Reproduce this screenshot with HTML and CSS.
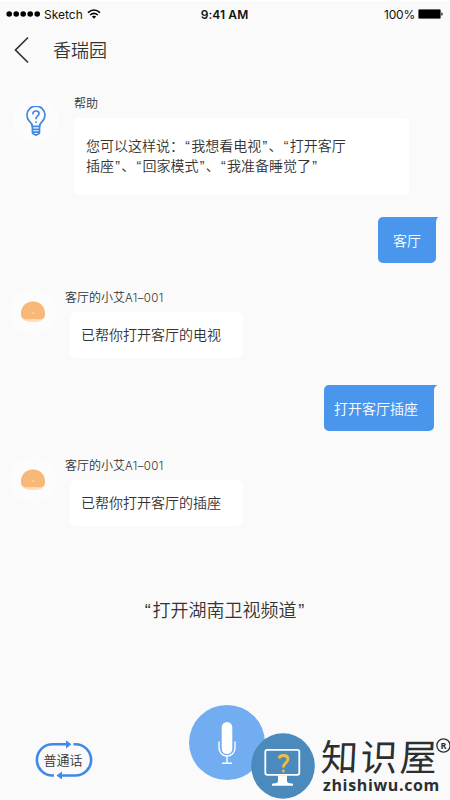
FILE: index.html
```html
<!DOCTYPE html>
<html lang="zh-CN">
<head>
<meta charset="utf-8">
<title>香瑞园</title>
<link rel="stylesheet" href="styles.css">
</head>
<body>
<div class="screen">
  <header class="status">
    <div class="carrier">
      <svg width="35" height="8" viewBox="0 0 35 8"><circle cx="3.2" cy="4" r="2.8"/><circle cx="10.2" cy="4" r="2.8"/><circle cx="17.2" cy="4" r="2.8"/><circle cx="24.2" cy="4" r="2.8"/><circle cx="31.2" cy="4" r="2.8"/></svg>
      <span class="network">Sketch</span>
      <svg width="14" height="10" viewBox="0 0 14 10"><g fill="none" stroke="#000" stroke-width="1.6"><path d="M1 3.7Q7-1.7 13 3.7"/><path d="M3.2 6Q7 2.7 10.8 6"/></g><path d="M4.9 7.5Q7 5.9 9.1 7.5L7 9.7z"/></svg>
    </div>
    <div class="clock">9:41 AM</div>
    <div class="power"><span class="percent">100%</span>
      <svg width="25" height="10" viewBox="0 0 25 10"><rect x=".5" y=".5" width="22" height="9" rx="1" fill="#000" stroke="#666"/><path d="M23.4 3.2q1.3.4 1.3 1.8t-1.3 1.8z"/></svg>
    </div>
  </header>
  <nav class="nav">
    <svg width="15" height="28" viewBox="0 0 15 28"><path d="M14 1.5L1.5 14 14 26.5" fill="none" stroke="#333" stroke-width="1.7"/></svg>
    <h1>香瑞园</h1>
  </nav>
  <main>
    <section class="message help">
      <div class="avatar">
        <svg width="20" height="31" viewBox="0 0 20 31" fill="none" stroke="#4287e2" stroke-width="1.7" stroke-linecap="round"><path d="M6.3 20.3c0-2.4-1.4-3.5-3-5.2A9 9 0 1 1 16.6 15.1c-1.6 1.7-3 2.8-3 5.2z"/><path d="M6.4 20.5v6q0 1.2 1.5 1.7 2 1.6 4 0 1.6-.5 1.6-1.7v-6M6.5 23.4h7M6.5 26.2h7"/><path d="M6.9 7.7Q7 5 10 5t3.1 2.6c0 2.3-3.1 2.3-3.1 5"/><path d="M10 16.2v.1"/></svg>
      </div>
      <div class="body">
        <div class="name">帮助</div>
        <div class="bubble">您可以这样说：<i>“</i>我想看电视<i>”</i>、<i>“</i>打开客厅<br>插座<i>”</i>、<i>“</i>回家模式<i>”</i>、<i>“</i>我准备睡觉了<i>”</i></div>
      </div>
    </section>
    <section class="sent room"><div class="sent-bubble">客厅<svg class="tail" width="4" height="6" viewBox="0 0 4 6"><path d="M0 0H3.2Q1.2 1.4 1 5L0 6z" fill="#4a96ed"/></svg></div></section>
    <section class="message reply">
      <div class="avatar">
        <svg width="26" height="22" viewBox="0 0 26 22"><path d="M1 13C1-3.8 25-3.8 25 13Q25 21 13 21T1 13z" fill="#fcdcba"/><path d="M1 12.5C1-3.6 25-3.6 25 12.5Q25 17.5 21.5 18.2 13 17.8 4.5 18.2 1 17.5 1 12.5z" fill="#f7b878"/><circle cx="13" cy="12" r=".8" fill="#ffe5b5"/></svg>
      </div>
      <div class="body"><div class="name">客厅的小艾<span class="model">A1–001</span></div><div class="bubble">已帮你打开客厅的电视</div></div>
    </section>
    <section class="sent socket"><div class="sent-bubble">打开客厅插座<svg class="tail" width="6" height="6" viewBox="0 0 6 6"><path d="M0 0H4.8Q1.2 1.4 1 5L0 6z" fill="#4a96ed"/></svg></div></section>
    <section class="message reply">
      <div class="avatar">
        <svg width="26" height="22" viewBox="0 0 26 22"><path d="M1 13C1-3.8 25-3.8 25 13Q25 21 13 21T1 13z" fill="#fcdcba"/><path d="M1 12.5C1-3.6 25-3.6 25 12.5Q25 17.5 21.5 18.2 13 17.8 4.5 18.2 1 17.5 1 12.5z" fill="#f7b878"/><circle cx="13" cy="12" r=".8" fill="#ffe5b5"/></svg>
      </div>
      <div class="body"><div class="name">客厅的小艾<span class="model">A1–001</span></div><div class="bubble">已帮你打开客厅的插座</div></div>
    </section>
    <p class="transcript"><i>“</i>打开湖南卫视频道<i>”</i></p>
  </main>
  <footer class="controls">
    <div class="language">
      <svg class="loop" width="58" height="42" viewBox="0 0 58 42"><g fill="none" stroke="#3f8ae8" stroke-width="2.6"><path d="M32 5.3H17.5A15.6 15.6 0 0 0 17.5 36.5H19"/><path d="M38.5 5.3H40.5A15.6 15.6 0 0 1 40.5 36.5H24"/></g><path d="M31 1.2L36.3 5.3 31 9.4zM27 32.4L21.5 36.5 27 40.6z" fill="#3f8ae8"/></svg>
      <span>普通话</span>
    </div>
    <div class="mic">
      <svg width="18" height="44" viewBox="0 0 18 44"><rect x="3.7" y="1" width="10.6" height="32" rx="5.3" fill="#fff"/><path d="M1 20.5V27a8 8 0 0 0 16 0v-6.5M9 35v7M4 42.3h10" fill="none" stroke="#fff" stroke-width="1.4"/></svg>
    </div>
  </footer>
  <aside class="watermark">
    <svg class="badge" width="64" height="66" viewBox="0 0 64 66"><ellipse cx="32" cy="33" rx="31.8" ry="32.7" fill="#4b8abd"/><rect x="14.3" y="16.8" width="34" height="25" rx="2" fill="none" stroke="#fff" stroke-width="1.8"/><path d="M27 42.5h9v5.5q0 2 3 2.3l3 .4v2H21v-2l3-.4q3-.3 3-2.3z" fill="#fff"/><path d="M28 25.5Q28.6 22.5 32.4 22.5 37 22.6 37 26.3C37 29.7 32.3 30 32.3 34.5" fill="none" stroke="#efbd42" stroke-width="2.8"/><circle cx="32.3" cy="38" r="1.5" fill="#efbd42"/></svg>
    <div class="brand"><div class="brand-name">知识屋</div><div class="domain">zhishiwu.com</div></div>
    <svg class="registered" width="15" height="15" viewBox="0 0 15 15"><circle cx="7.5" cy="7.5" r="6.6" fill="none" stroke="#2c2f30" stroke-width="1.3"/><text x="7.6" y="10.9" text-anchor="middle">R</text></svg>
  </aside>
</div>
</body>
</html>
```
FILE: styles.css
```css
* { box-sizing: border-box; }
body { margin: 0; }
.screen { position: relative; width: 450px; height: 800px; overflow: hidden; display: flex; flex-direction: column; background: #fafafa; border-top: 1px solid #fff; color: #333; font-family: "Noto Sans CJK SC", sans-serif; font-weight: 350; }
svg { display: block; flex: none; }
.status { height: 26px; padding: 0 7px 0 6px; display: grid; grid-template-columns: 1fr auto 1fr; align-items: center; color: #111; font: 400 12px/14px Inter, sans-serif; }
.carrier, .power { display: flex; align-items: center; }
.network { margin: 0 4px 0 3px; padding-top: 1px; }
.clock { padding-top: 1px; font-weight: 600; letter-spacing: .1px; }
.percent { padding-top: 1px; letter-spacing: -.2px; }
.power { justify-content: flex-end; gap: 3px; }
.nav { height: 45px; padding-left: 14px; display: flex; align-items: center; gap: 24px; }
h1 { margin: -2px 0 0; font-size: 18px; line-height: 26px; font-weight: 350; }
main { display: flex; flex-direction: column; }
.message { display: flex; }
.avatar { display: flex; align-items: center; justify-content: center; flex: none; width: 46px; height: 46px; border-radius: 50%; background: #fcfcfc; }
.name { font-size: 12px; line-height: 16px; }
.model { font-family: Inter, sans-serif; font-size: 11.5px; letter-spacing: .4px; }
.bubble { background: #fff; border-radius: 5px; font-size: 14px; }
.help { margin-top: 23px; }
.help .avatar { margin: 3px 0 0 13px; }
.help .body { margin-left: 15px; }
.help .name { height: 23px; }
.help .bubble { width: 335px; height: 77px; padding: 17px 12px; line-height: 20px; white-space: nowrap; }
i { display: inline-block; width: .52em; line-height: 1; text-align: center; font-style: normal; font-family: "Liberation Sans", sans-serif; }
.sent { display: flex; }
.sent-bubble { position: relative; height: 46px; border-radius: 5px 0 5px 5px; background: #4a96ed; color: #fff; font-size: 14px; line-height: 46px; }
.tail { position: absolute; top: 0; left: calc(100% - 1px); }
.room { margin: 22px 0 0 378px; }
.room .sent-bubble { width: 58px; padding-left: 15px; }
.reply { height: 70px; margin-top: 25px; }
.reply .avatar { margin: 1px 0 0 10px; }
.reply .body { margin-left: 9px; }
.reply .name { padding-top: 1px; height: 24px; }
.reply .bubble { width: 173px; height: 46px; margin-left: 5px; padding-left: 11px; line-height: 45px; }
.socket { margin: 27px 0 0 324px; }
.socket .sent-bubble { width: 110px; padding-left: 10px; }
.transcript { margin: 69px 0 0; padding-right: 1px; text-align: center; font-size: 18px; line-height: 28px; }
.controls { margin-top: auto; height: 95px; padding-left: 35px; display: flex; align-items: flex-start; gap: 96px; }
.language { display: grid; place-items: center; width: 58px; height: 42px; margin-top: 34px; font-size: 13px; }
.language > * { grid-area: 1 / 1; }
.language span { margin: -1px 2px 0 0; }
.mic { display: grid; place-items: center; width: 76px; height: 75px; border-radius: 50%; background: #72acf1; }
.watermark { position: absolute; left: 251px; top: 732px; width: 199px; height: 68px; display: flex; color: #2c2f30; }
.brand { padding-left: 6px; width: 128px; margin-top: 2px; }
.brand-name { height: 41px; font-size: 37px; line-height: 41px; font-weight: 400; letter-spacing: 2.5px; transform: skewX(-3deg); }
.domain { height: 18px; padding-left: 2px; font: 700 16px/18px "Open Sans", sans-serif; letter-spacing: .65px; }
.registered { position: absolute; left: 185px; top: 5px; }
.registered text { font: 700 9px "Open Sans", sans-serif; fill: #2c2f30; }
```
